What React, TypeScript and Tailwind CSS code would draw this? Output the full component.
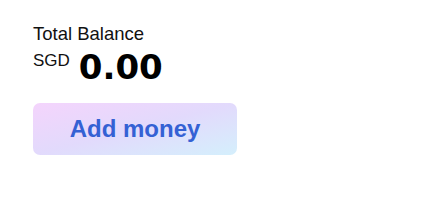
import React from 'react';

export default function App() {
  return (
    <div className="min-h-screen bg-white pl-[33px] pt-[24px]" style={{ fontFamily: '"Liberation Sans", Arial, sans-serif' }}>
      <div className="text-[18.5px] leading-[20px] text-[#111]">Total Balance</div>
      <div className="flex items-start gap-[9px] mt-[6px]">
        <span className="text-[17px] leading-[17px] text-[#111] mt-[2px]">SGD</span>
        <span
          className="text-[34px] leading-[34px] font-bold text-black"
          style={{ fontFamily: '"DejaVu Sans", Verdana, sans-serif' }}
        >
          0.00
        </span>
      </div>
      <button className="mt-[19px] w-[204px] h-[52px] rounded-[7px] bg-gradient-to-br from-[#f4d4fc] via-[#e2dafc] to-[#d4effc] text-[24px] leading-[28px] font-bold text-[#3461d4]">
        Add money
      </button>
    </div>
  );
}
